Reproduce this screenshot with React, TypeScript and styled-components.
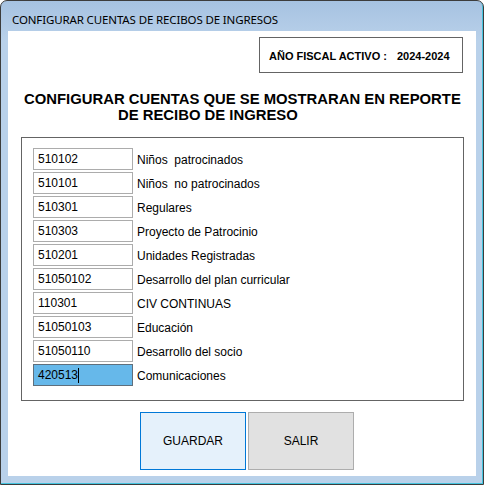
import React from 'react';
import styled, { createGlobalStyle } from 'styled-components';

const cuentas = [
  { codigo: '510102', nombre: 'Niños  patrocinados' },
  { codigo: '510101', nombre: 'Niños  no patrocinados' },
  { codigo: '510301', nombre: 'Regulares' },
  { codigo: '510303', nombre: 'Proyecto de Patrocinio' },
  { codigo: '510201', nombre: 'Unidades Registradas' },
  { codigo: '51050102', nombre: 'Desarrollo del plan curricular' },
  { codigo: '110301', nombre: 'CIV CONTINUAS' },
  { codigo: '51050103', nombre: 'Educación' },
  { codigo: '51050110', nombre: 'Desarrollo del socio' },
  { codigo: '420513', nombre: 'Comunicaciones', activo: true },
];

const App: React.FC = () => {
  return (
    <>
      <GlobalStyle />
      <Window>
        <TitleBar>CONFIGURAR CUENTAS DE RECIBOS DE INGRESOS</TitleBar>
        <Client>
          <FiscalRow>
            <FiscalBox>
              <span>AÑO FISCAL ACTIVO :</span>
              <span>2024-2024</span>
            </FiscalBox>
          </FiscalRow>

          <Heading>
            <HeadingLine>CONFIGURAR CUENTAS QUE SE MOSTRARAN EN REPORTE</HeadingLine>
            <HeadingLine $indent={94}>DE RECIBO DE INGRESO</HeadingLine>
          </Heading>

          <GroupBox>
            {cuentas.map(c => (
              <AccountRow key={c.codigo}>
                <Field $active={!!c.activo}>
                  {c.codigo}
                  {c.activo && <Caret />}
                </Field>
                <AccountLabel>{c.nombre}</AccountLabel>
              </AccountRow>
            ))}
          </GroupBox>

          <Buttons>
            <Button $primary>GUARDAR</Button>
            <Button>SALIR</Button>
          </Buttons>
        </Client>
      </Window>
    </>
  );
};

const GlobalStyle = createGlobalStyle`
  html, body {
    margin: 0;
    padding: 0;
    background: #ffffff;
  }
  body {
    font-family: "Liberation Sans", Arial, sans-serif;
  }
`;

const Window = styled.div`
  width: 484px;
  height: 485px;
  box-sizing: border-box;
  border: 1px solid #3c3c3c;
  border-radius: 7px 7px 0 0;
  background: linear-gradient(to bottom, #a6c2e1 0px, #b9d1ea 40px, #b9d1ea 100%);
  box-shadow: inset -1px -1px 0 #45c4de;
  display: flex;
  flex-direction: column;
  overflow: hidden;
`;

const TitleBar = styled.div`
  height: 30px;
  box-sizing: border-box;
  padding: 7px 0 0 11px;
  display: flex;
  align-items: center;
  font-family: "Noto Sans", "Open Sans", sans-serif;
  font-size: 11.5px;
  color: #000000;
  letter-spacing: -0.13px;
`;

const Client = styled.div`
  flex: 1;
  margin: 0 7px 8px 7px;
  background: #ffffff;
  display: flex;
  flex-direction: column;
  padding: 6px 0 0 0;
`;

const FiscalRow = styled.div`
  display: flex;
  justify-content: flex-end;
  padding-right: 13px;
`;

const FiscalBox = styled.div`
  width: 204px;
  height: 36px;
  box-sizing: border-box;
  border: 1px solid #646464;
  display: flex;
  align-items: center;
  gap: 10px;
  padding: 2px 0 0 9px;
  font-size: 11px;
  font-weight: bold;
  color: #000000;
`;

const Heading = styled.div`
  margin: 18px 0 0 16px;
  font-size: 14.85px;
  font-weight: bold;
  line-height: 16px;
  color: #000000;
`;

const HeadingLine = styled.div<{ $indent?: number }>`
  padding-left: ${({ $indent }) => $indent ?? 0}px;
  white-space: nowrap;
`;

const GroupBox = styled.div`
  margin: 14px 0 0 13px;
  width: 443px;
  height: 264px;
  box-sizing: border-box;
  border: 1px solid #646464;
  padding: 10px 0 0 11px;
  display: flex;
  flex-direction: column;
  gap: 2px;
`;

const AccountRow = styled.div`
  display: flex;
  align-items: center;
  gap: 4px;
  height: 22px;
`;

const Field = styled.div<{ $active: boolean }>`
  position: relative;
  width: 100px;
  height: 22px;
  box-sizing: border-box;
  border: 1px solid ${({ $active }) => ($active ? '#5f6f7c' : '#acacac')};
  background: ${({ $active }) => ($active ? '#66b8ea' : '#ffffff')};
  padding: 1px 0 0 4px;
  font-size: 12px;
  line-height: 19px;
  color: #000000;
  display: flex;
  align-items: flex-start;
`;

const Caret = styled.span`
  display: inline-block;
  width: 1px;
  height: 15px;
  margin: 2px 0 0 0;
  background: #000000;
`;

const AccountLabel = styled.span`
  font-size: 12px;
  line-height: 22px;
  padding-top: 1px;
  color: #000000;
  white-space: pre;
`;

const Buttons = styled.div`
  display: flex;
  gap: 2px;
  margin: 11px 0 0 132px;
`;

const Button = styled.button<{ $primary?: boolean }>`
  width: 106px;
  height: 58px;
  box-sizing: border-box;
  border: 1px solid ${({ $primary }) => ($primary ? '#0078d7' : '#adadad')};
  background: ${({ $primary }) => ($primary ? '#e5f1fb' : '#e1e1e1')};
  font-family: "Liberation Sans", Arial, sans-serif;
  font-size: 12px;
  color: #000000;
  padding: 0;
  cursor: pointer;
`;

export default App;
